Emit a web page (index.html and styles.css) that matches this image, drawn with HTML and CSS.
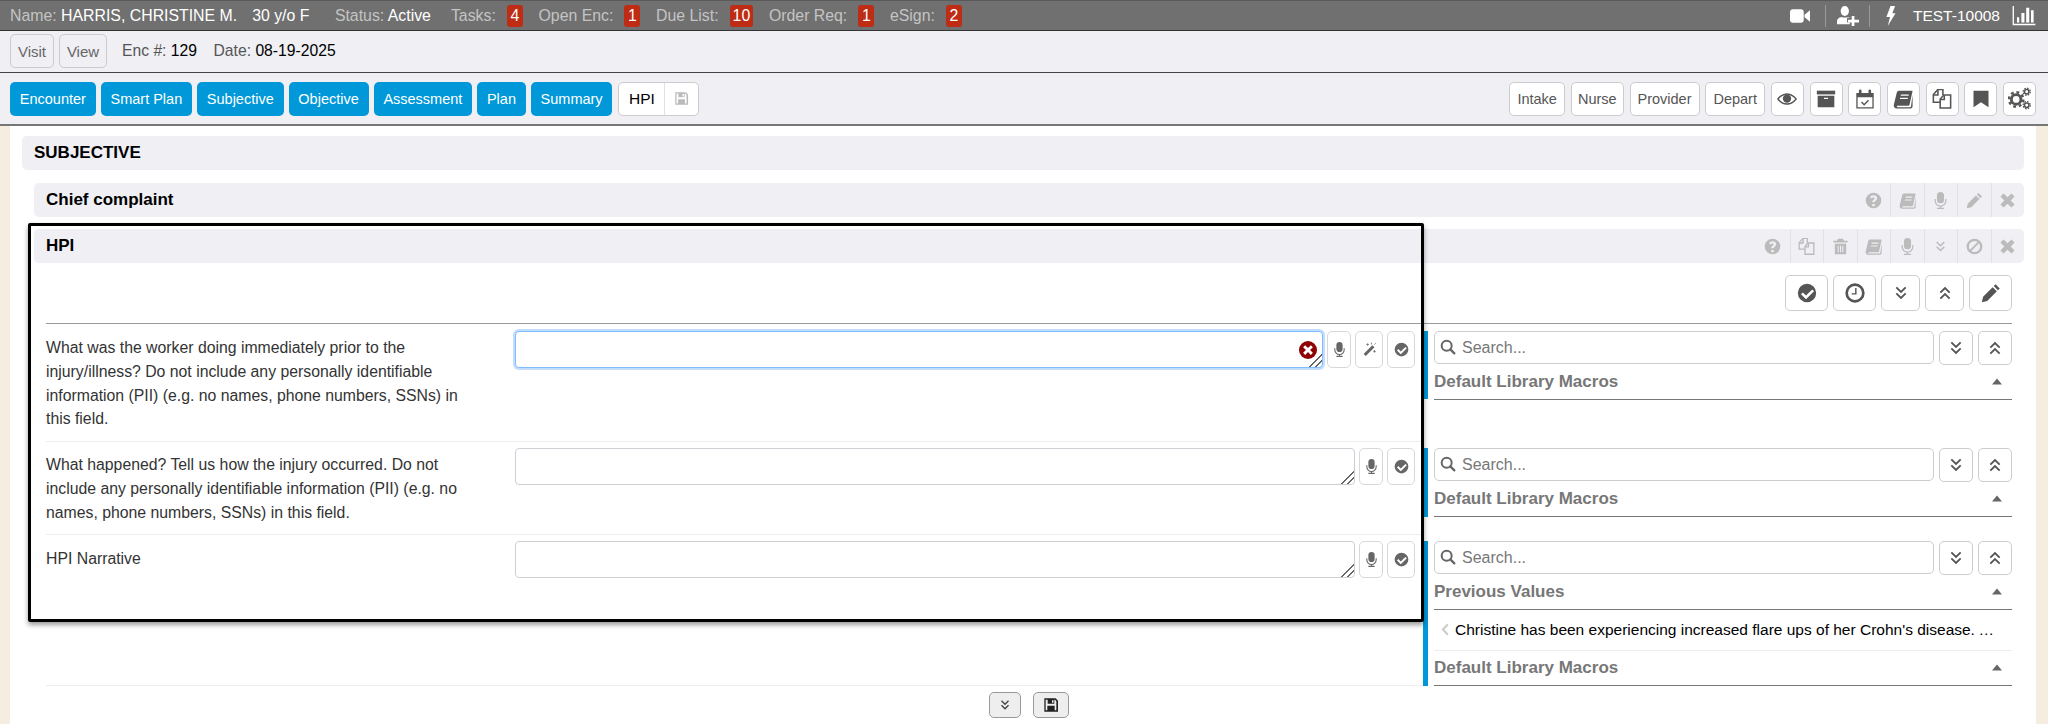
FILE: index.html
```html
<!DOCTYPE html>
<html lang="en">
<head>
<meta charset="utf-8">
<title>Encounter - HPI</title>
<link rel="stylesheet" href="styles.css">
</head>
<body>
<svg class="sprite" xmlns="http://www.w3.org/2000/svg">
  <symbol id="i-video" viewBox="0 0 24 24"><rect x="0" y="4" width="16.500" height="16" rx="3.500"/><path d="M17.500 10.500 24 5v14l-6.500-5.500z"/></symbol>
  <symbol id="i-userplus" viewBox="0 0 24 24"><ellipse cx="8.500" cy="6.500" rx="4.500" ry="5.500"/><path d="M0 21v-3c0-3 2-4.500 5-5 1 1 5.500 1 7 0 .8.200 1.500.5 2 1h-3v5h3v2z"/><path d="M16 12h3v4h5v3h-5v4h-3v-4h-4v-3h4z"/></symbol>
  <symbol id="i-bolt" viewBox="0 0 12 24"><path d="M6 1h5L8 9h3.500L3 23l2.500-10H1.500z"/></symbol>
  <symbol id="i-chart" viewBox="0 0 26 24"><path d="M0 1h1.500v20.500H26V23H0z"/><path d="M5 14h2.500v6H5zM10 9h3.500v11H10zM15.500 3H19v17h-3.500zM21 6h3v14h-3z"/></symbol>
  <symbol id="i-eye" viewBox="0 0 24 24"><path fill-rule="evenodd" d="M12 5C6.500 5 2.200 8.800 0 12c2.200 3.200 6.500 7 12 7s9.800-3.800 12-7c-2.200-3.200-6.500-7-12-7zm0 1.800c4.400 0 8 2.800 9.800 5.200-1.800 2.400-5.400 5.200-9.800 5.200S4 14.400 2.200 12C4 9.600 7.600 6.800 12 6.800z"/><circle cx="12" cy="11.500" r="5"/></symbol>
  <symbol id="i-archive" viewBox="0 0 24 24"><rect x="1" y="2" width="22" height="4.500"/><path fill-rule="evenodd" d="M2 8h20v14H2zM9.500 10.500V12h5v-1.500z"/></symbol>
  <symbol id="i-calendar" viewBox="1.500 .5 21 23"><path fill-rule="evenodd" d="M2 5h20v18H2zM3.500 10v11.500h17V10z"/><rect x="5" y="1" width="3" height="6" rx="1.500"/><rect x="16" y="1" width="3" height="6" rx="1.500"/><path class="line" d="M8 15.500l3 3 5-5"/></symbol>
  <symbol id="i-book" viewBox="0 0 24 24"><path fill-rule="evenodd" d="M7 2h15.500c.8 0 1 .6.800 1.300L19.800 19c-.2.800-.7 1.100-1.400 1.100H5.500c-1.400 0-1.400 1.900.3 1.900h14.600c.6 0 1-.4 1.200-1L23.500 7v14c-.2 1.400-1.300 2.500-3 2.500H4.500C2 23.500.5 21.300 1 19L4.500 4.500C4.900 3 5.700 2 7 2zm2.500 4.500-.3 1.500h9.500l.3-1.500zm-1 4-.3 1.500h9.500l.3-1.500z"/></symbol>
  <symbol id="i-copy" viewBox="1.500 1.500 21 22"><path class="line" d="M10 16H2.500V7.500L7.500 2H13v6"/><path class="line" d="M7.500 2.500V8H2.500"/><path class="line" d="M10 22.500V12.500L14 8h7.500v14.500z"/><path class="line" d="M14.500 8.500V13H10"/></symbol>
  <symbol id="i-bookmark" viewBox="0 0 24 24"><path d="M3 2h18v20L12 16 3 22z"/></symbol>
  <symbol id="i-gears" viewBox="0 0 24 24"><circle class="ring" cx="8.500" cy="13" r="5" stroke-width="3"/><circle class="teeth" cx="8.500" cy="13" r="7.500" stroke-width="2.500" stroke-dasharray="3 2.900"/><circle class="ring" cx="19.500" cy="5" r="2.300" stroke-width="1.600"/><circle class="teeth" cx="19.500" cy="5" r="3.700" stroke-width="1.400" stroke-dasharray="1.600 1.300"/><circle class="ring" cx="19.500" cy="19" r="2.300" stroke-width="1.600"/><circle class="teeth" cx="19.500" cy="19" r="3.700" stroke-width="1.400" stroke-dasharray="1.600 1.300"/></symbol>
  <symbol id="i-help" viewBox="0 0 24 24"><path fill-rule="evenodd" d="M12 1a11 11 0 1 0 0 22 11 11 0 0 0 0-22zm-1.800 16h3.600v3h-3.600zM12 4.500c3 0 5.200 1.700 5.200 4.300 0 3.200-3.500 3.400-3.500 5.700h-3.500c0-3.600 3.300-3.900 3.300-5.500 0-.8-.7-1.300-1.600-1.300-1 0-1.800.6-2.300 1.500L7 7.300C8 5.600 9.700 4.500 12 4.500z"/></symbol>
  <symbol id="i-mic" viewBox="0 0 24 24"><rect x="7" y="0" width="10" height="16" rx="5"/><path class="line" d="M4.500 10v2.500a7.500 7.500 0 0 0 15 0V10M12 20v3M7 23h10"/></symbol>
  <symbol id="i-pencil" viewBox="0 0 24 24"><path d="M17.500 1.500 22.500 6.500 20.300 8.700 15.300 3.700zM14 5l5 5L7.500 21.500 1 23l1.500-6.500z"/></symbol>
  <symbol id="i-times" viewBox="0 0 24 24"><path d="M6.500 2 12 7.500 17.500 2 22 6.500 16.500 12 22 17.500 17.500 22 12 16.500 6.500 22 2 17.500 7.500 12 2 6.500z"/></symbol>
  <symbol id="i-trash" viewBox="0 0 24 24"><path fill-rule="evenodd" d="M8.500 1h7l1.500 3h5v2.500H2V4h5zM4 8h16v15H4zm4 3v9h1.500v-9zm3.300 0v9h1.500v-9zm3.200 0v9H16v-9z"/></symbol>
  <symbol id="i-ddown" viewBox="0 0 24 24"><path class="line heavy" d="M5 3.500l7 7 7-7M5 12.500l7 7 7-7"/></symbol>
  <symbol id="i-dup" viewBox="0 0 24 24"><path class="line heavy" d="M5 11.500l7-7 7 7M5 20.500l7-7 7 7"/></symbol>
  <symbol id="i-ban" viewBox="0 0 24 24"><circle class="ring" cx="12" cy="12" r="9.500" stroke-width="3.200"/><path class="line heavy" d="M5.500 18.500l13-13"/></symbol>
  <symbol id="i-check" viewBox="0 0 24 24"><path fill-rule="evenodd" d="M12 1a11 11 0 1 0 0 22 11 11 0 0 0 0-22zm6.300 6.800 2.200 2.200-9.700 9.400-6-5.900 2.200-2.200 3.800 3.700z"/></symbol>
  <symbol id="i-clock" viewBox="0 0 24 24"><circle class="ring" cx="12" cy="12" r="10" stroke-width="3.200"/><path class="line" d="M13 6v7H8"/></symbol>
  <symbol id="i-wand" viewBox="0 0 24 24"><path d="M16.500 5l3.500 3.500L6 22.500 2.500 19z"/><path class="line thin" d="M9 2v4M7 4h4M20 13v4M18 15h4M15 1v3M22 2l-2 2"/></symbol>
  <symbol id="i-search" viewBox="0 0 24 24"><circle class="ring" cx="10" cy="10" r="7.500" stroke-width="3"/><path class="line round" d="M15.500 15.500l6 6"/></symbol>
  <symbol id="i-save" viewBox="0 0 24 24"><path fill-rule="evenodd" d="M2 2h17l3.500 3.500V22H2zM4 4v16h16V6.500L18 4h-1v6H7V4zm9.500.8v4h2.200v-4zM6.500 13h11v7h-11z"/></symbol>
  <symbol id="i-caret" viewBox="0 0 12 8"><path d="M6 .5 12 7.500H0z"/></symbol>
  <symbol id="i-chev" viewBox="0 0 10 16"><path class="line heavy" d="M8.500 1.500 2.500 8l6 6.500"/></symbol>
  <symbol id="i-error" viewBox="0 0 24 24"><circle cx="12" cy="12" r="12"/><path class="cross" d="M8.200 5.500 12 9.300l3.800-3.800 2.700 2.700L14.700 12l3.800 3.800-2.700 2.700-3.800-3.800-3.800 3.800-2.700-2.700L9.300 12 5.500 8.200z"/></symbol>
</svg>

<header class="patient-bar">
  <span class="info name">Name: <b>HARRIS, CHRISTINE M.</b></span>
  <span class="info age"><b>30 y/o F</b></span>
  <span class="info status">Status: <b>Active</b></span>
  <span class="info">Tasks:</span><span class="badge">4</span>
  <span class="info">Open Enc:</span><span class="badge">1</span>
  <span class="info">Due List:</span><span class="badge">10</span>
  <span class="info">Order Req:</span><span class="badge">1</span>
  <span class="info">eSign:</span><span class="badge">2</span>
  <div class="bar-tools">
    <svg class="ti ti-video"><use href="#i-video"/></svg>
    <span class="bar-sep"></span>
    <svg class="ti ti-user"><use href="#i-userplus"/></svg>
    <span class="bar-sep"></span>
    <svg class="ti ti-bolt"><use href="#i-bolt"/></svg>
    <span class="bar-user">TEST-10008</span>
    <svg class="ti ti-chart"><use href="#i-chart"/></svg>
  </div>
</header>

<div class="enc-bar">
  <button class="btn btn-visit">Visit</button>
  <button class="btn btn-view">View</button>
  <span class="enc-field">Enc #: <b>129</b></span>
  <span class="enc-field">Date: <b>08-19-2025</b></span>
</div>

<nav class="nav-bar">
  <a class="tab">Encounter</a>
  <a class="tab">Smart Plan</a>
  <a class="tab">Subjective</a>
  <a class="tab">Objective</a>
  <a class="tab">Assessment</a>
  <a class="tab">Plan</a>
  <a class="tab">Summary</a>
  <div class="hpi-group"><span class="hpi-name">HPI</span><span class="hpi-save"><svg class="ico ico-sm"><use href="#i-save"/></svg></span></div>
  <div class="nav-right">
    <button class="btn btn-nav w-intake">Intake</button>
    <button class="btn btn-nav w-nurse">Nurse</button>
    <button class="btn btn-nav w-provider">Provider</button>
    <button class="btn btn-nav w-depart">Depart</button>
    <button class="btn btn-ic"><svg class="ico"><use href="#i-eye"/></svg></button>
    <button class="btn btn-ic"><svg class="ico"><use href="#i-archive"/></svg></button>
    <button class="btn btn-ic"><svg class="ico"><use href="#i-calendar"/></svg></button>
    <button class="btn btn-ic"><svg class="ico"><use href="#i-book"/></svg></button>
    <button class="btn btn-ic"><svg class="ico"><use href="#i-copy"/></svg></button>
    <button class="btn btn-ic"><svg class="ico"><use href="#i-bookmark"/></svg></button>
    <button class="btn btn-ic"><svg class="ico ico-lg"><use href="#i-gears"/></svg></button>
  </div>
</nav>

<main class="workspace">
  <div class="sheet">
    <h1 class="section-head">SUBJECTIVE</h1>

    <div class="sub-head">
      <h2>Chief complaint</h2>
      <div class="head-tools">
        <span class="cell"><svg><use href="#i-help"/></svg></span>
        <span class="cell"><svg><use href="#i-book"/></svg></span>
        <span class="cell"><svg><use href="#i-mic"/></svg></span>
        <span class="cell"><svg><use href="#i-pencil"/></svg></span>
        <span class="cell"><svg><use href="#i-times"/></svg></span>
      </div>
    </div>

    <div class="sub-head sub-head-hpi">
      <h2>HPI</h2>
      <div class="head-tools">
        <span class="cell"><svg><use href="#i-help"/></svg></span>
        <span class="cell"><svg><use href="#i-copy"/></svg></span>
        <span class="cell"><svg><use href="#i-trash"/></svg></span>
        <span class="cell"><svg><use href="#i-book"/></svg></span>
        <span class="cell"><svg><use href="#i-mic"/></svg></span>
        <span class="cell"><svg class="small"><use href="#i-ddown"/></svg></span>
        <span class="cell"><svg><use href="#i-ban"/></svg></span>
        <span class="cell"><svg><use href="#i-times"/></svg></span>
      </div>
    </div>

    <div class="form-tools">
      <button class="btn btn-tool wide"><svg class="ico"><use href="#i-check"/></svg></button>
      <button class="btn btn-tool wide"><svg class="ico"><use href="#i-clock"/></svg></button>
      <button class="btn btn-tool"><svg class="ico ico-dbl"><use href="#i-ddown"/></svg></button>
      <button class="btn btn-tool"><svg class="ico ico-dbl"><use href="#i-dup"/></svg></button>
      <button class="btn btn-tool wide"><svg class="ico"><use href="#i-pencil"/></svg></button>
    </div>

    <section class="q-row q-row-1">
      <div class="q-main">
        <label class="q-label">What was the worker doing immediately prior to the injury/illness? Do not include any personally identifiable information (PII) (e.g. no names, phone numbers, SSNs) in this field.</label>
        <div class="q-input">
          <textarea class="answer answer-focus"></textarea>
          <svg class="err"><use href="#i-error"/></svg>
        </div>
        <button class="btn btn-mini narrow"><svg class="ico-mini"><use href="#i-mic"/></svg></button>
        <button class="btn btn-mini"><svg class="ico-mini"><use href="#i-wand"/></svg></button>
        <button class="btn btn-mini"><svg class="ico-mini"><use href="#i-check"/></svg></button>
      </div>
      <aside class="macro">
        <div class="search-row">
          <div class="search"><svg class="search-ico"><use href="#i-search"/></svg><input placeholder="Search..."></div>
          <button class="btn btn-sq"><svg class="ico ico-dbl"><use href="#i-ddown"/></svg></button>
          <button class="btn btn-sq"><svg class="ico ico-dbl"><use href="#i-dup"/></svg></button>
        </div>
        <div class="macro-head"><span>Default Library Macros</span><svg class="caret"><use href="#i-caret"/></svg></div>
      </aside>
    </section>

    <section class="q-row q-row-2">
      <div class="q-main">
        <label class="q-label">What happened? Tell us how the injury occurred. Do not include any personally identifiable information (PII) (e.g. no names, phone numbers, SSNs) in this field.</label>
        <div class="q-input"><textarea class="answer"></textarea></div>
        <button class="btn btn-mini narrow"><svg class="ico-mini"><use href="#i-mic"/></svg></button>
        <button class="btn btn-mini"><svg class="ico-mini"><use href="#i-check"/></svg></button>
      </div>
      <aside class="macro">
        <div class="search-row">
          <div class="search"><svg class="search-ico"><use href="#i-search"/></svg><input placeholder="Search..."></div>
          <button class="btn btn-sq"><svg class="ico ico-dbl"><use href="#i-ddown"/></svg></button>
          <button class="btn btn-sq"><svg class="ico ico-dbl"><use href="#i-dup"/></svg></button>
        </div>
        <div class="macro-head"><span>Default Library Macros</span><svg class="caret"><use href="#i-caret"/></svg></div>
      </aside>
    </section>

    <section class="q-row q-row-3">
      <div class="q-main">
        <label class="q-label">HPI Narrative</label>
        <div class="q-input"><textarea class="answer"></textarea></div>
        <button class="btn btn-mini narrow"><svg class="ico-mini"><use href="#i-mic"/></svg></button>
        <button class="btn btn-mini"><svg class="ico-mini"><use href="#i-check"/></svg></button>
      </div>
      <aside class="macro">
        <div class="search-row">
          <div class="search"><svg class="search-ico"><use href="#i-search"/></svg><input placeholder="Search..."></div>
          <button class="btn btn-sq"><svg class="ico ico-dbl"><use href="#i-ddown"/></svg></button>
          <button class="btn btn-sq"><svg class="ico ico-dbl"><use href="#i-dup"/></svg></button>
        </div>
        <div class="macro-head"><span>Previous Values</span><svg class="caret"><use href="#i-caret"/></svg></div>
        <div class="prev-item"><svg class="chev"><use href="#i-chev"/></svg><span class="prev-text">Christine has been experiencing increased flare ups of her Crohn's disease. Abdominal</span></div>
        <div class="macro-head macro-head-last"><span>Default Library Macros</span><svg class="caret"><use href="#i-caret"/></svg></div>
      </aside>
    </section>

    <footer class="form-foot">
      <button class="btn btn-foot"><svg class="ico-foot"><use href="#i-ddown"/></svg></button>
      <button class="btn btn-foot foot-save"><svg class="ico-foot save"><use href="#i-save"/></svg></button>
    </footer>

    <div class="highlight"></div>
  </div>
</main>
</body>
</html>
```
FILE: styles.css
```css
* { box-sizing: border-box; }
html, body { margin: 0; padding: 0; height: 724px; overflow: hidden; }
body { font-family: "Liberation Sans", Arial, sans-serif; font-size: 15px; color: #333; background: #fff; }
h1, h2 { margin: 0; }
b { font-weight: 400; }
svg { fill: currentColor; display: block; }
.sprite { position: absolute; width: 0; height: 0; }
.line { fill: none; stroke: currentColor; stroke-width: 1.7; }
.line.heavy { stroke-width: 2.700; }
.line.thin { stroke-width: 1.300; }
.line.round { stroke-width: 3.400; stroke-linecap: round; }
.ring, .teeth { fill: none; stroke: currentColor; }
.cross { fill: #fff; }

/* patient bar */
.patient-bar { height: 31px; display: flex; align-items: center; padding: 0 11px 0 10px; background: #707070; border-top: 1px solid #5a5a5a; border-bottom: 1px solid #333; color: #c4c4c4; font-size: 15.850px; }
.patient-bar b { color: #fff; }
.info { white-space: nowrap; }
.age { margin-left: 15px; }
.status { margin-left: 25.500px; margin-right: 20px; }
.badge { min-width: 16px; height: 22px; margin: 0 15.700px 0 11px; padding: 0 3px; background: #bd2c13; color: #fff; border-radius: 3px; text-align: center; line-height: 22px; }
.bar-tools { margin-left: auto; display: flex; align-items: center; color: #fff; }
.ti { width: 20px; height: 20px; }
.ti-user { width: 24px; height: 22px; margin: 0 9px 0 10px; }
.ti-video { margin-right: 15px; }
.ti-bolt { width: 11px; height: 22px; margin-left: 15px; }
.ti-chart { width: 26px; height: 21px; margin-left: 11px; }
.bar-sep { width: 1px; height: 22px; background: #999; }
.bar-user { margin-left: 17px; font-size: 15.500px; }

/* encounter bar */
.enc-bar { height: 42px; display: flex; align-items: center; padding: 0 10px 1px; background: #efeff4; border-bottom: 1px solid #444; color: #555; font-size: 15.700px; }
.enc-bar b { color: #000; }
.btn { font-family: inherit; margin: 0; padding: 0; background: #fff; border: 1px solid #ccc; border-radius: 5px; color: #555; display: flex; align-items: center; justify-content: center; }
.btn-visit, .btn-view { height: 34px; background: #efeff4; font-size: 15px; color: #666; }
.btn-visit { width: 44px; margin-right: 5px; }
.btn-view { width: 48px; margin-right: 15px; }
.enc-field { margin-right: 16.500px; }

/* nav bar */
.nav-bar { height: 53px; display: flex; align-items: center; padding: 0 12px 0 10px; background: #efeff4; border-bottom: 2px solid #777; }
.tab { height: 34px; padding: 0 9.800px; margin-right: 5px; background: #0098d9; color: #fff; border-radius: 5px; line-height: 34px; font-size: 14.500px; white-space: nowrap; }
.hpi-group { height: 34px; display: flex; margin-left: 1px; background: #fff; border: 1px solid #ccc; border-radius: 5px; }
.hpi-name { width: 46px; text-align: center; line-height: 32px; color: #000; font-size: 15.500px; border-right: 1px solid #e2e2e2; }
.hpi-save { width: 33px; display: flex; align-items: center; justify-content: center; color: #bbb; }
.nav-right { margin-left: auto; display: flex; gap: 5.700px; }
.btn-nav { height: 34px; font-size: 14.500px; }
.w-intake { width: 56px; }
.w-nurse { width: 53px; }
.w-provider { width: 70px; }
.w-depart { width: 60px; }
.btn-ic { width: 33px; height: 34px; }
.ico { width: 20px; height: 20px; color: #555; }
.ico-lg { width: 23px; height: 23px; }
.ico-sm { width: 15px; height: 15px; color: #bbb; }

/* workspace */
.workspace { height: 599px; padding: 0 12px 0 10px; background: #f5eee0; }
.sheet { position: relative; height: 100%; padding-top: 10px; background: #fff; }
.section-head { height: 34px; margin: 0 12px; padding-left: 12px; background: #efeff4; border-radius: 5px; color: #000; font-size: 17px; line-height: 34px; }
.sub-head { height: 34px; margin: 13px 12px 0 24px; padding-left: 12px; display: flex; justify-content: space-between; background: #efeff4; border-radius: 5px; color: #000; }
.sub-head-hpi { margin-top: 12px; }
.sub-head h2 { font-size: 17px; line-height: 34px; }
.head-tools { display: flex; color: #bbb; }
.cell { width: 33.500px; display: flex; align-items: center; justify-content: center; border-left: 1px solid #e2e2e2; }
.cell:first-child { border-left: 0; }
.cell svg { width: 17px; height: 17px; }
.cell svg.small { width: 13px; height: 13px; }

.form-tools { height: 61px; margin: 0 24px 0 36px; padding-top: 12px; display: flex; justify-content: flex-end; gap: 5px; border-bottom: 1px solid #999; }
.btn-tool { width: 39px; height: 36px; }
.btn-tool.wide { width: 43px; }
.ico-dbl { width: 16px; height: 16px; }

/* question rows */
.q-row { display: flex; padding-left: 36px; }
.q-main { width: 1377px; display: flex; align-items: flex-start; padding: 6px 8px 0 0; border-bottom: 1px solid #eee; }
.q-row-1 { height: 118px; }
.q-row-2 { height: 93px; }
.q-row-3 { height: 151px; }
.q-row-1 .q-main { padding-top: 7px; }
.q-label { width: 469px; flex: none; padding: 5px 45px 0 0; color: #333; font-size: 15.800px; line-height: 23.800px; }
.q-row-3 .q-label { padding-top: 6px; }
.q-input { position: relative; flex: 1; min-width: 0; margin-right: 4px; }
.answer { display: block; width: 100%; height: 37px; margin: 0; padding: 4px 8px; border: 1px solid #ccd0d5; border-radius: 4px; resize: both; outline: 0; font: inherit; }
.answer::-webkit-resizer { background: linear-gradient(135deg, transparent 56%, #666 56% 62%, transparent 62% 76%, #666 76% 82%, transparent 82%); }
.answer-focus { border-color: #80bdff; box-shadow: 0 0 0 2px #c2defc; }
.err { position: absolute; right: 6px; top: 10px; width: 18px; height: 18px; color: #8e0303; }
.btn-mini { flex: none; width: 28px; height: 37px; margin-right: 4px; border-color: #d8d8d8; }
.btn-mini:last-child { margin-right: 0; }
.btn-mini.narrow { width: 24px; }
.btn-mini svg { color: #666; }
.ico-mini { width: 15px; height: 15px; }
.macro { flex: 1; min-width: 0; margin: 6px 24px 0 0; padding-left: 6px; border-left: 5px solid #0098d9; }
.q-row-1 .macro { height: 68px; margin-top: 7px; }
.q-row-2 .macro { height: 69px; }
.search-row { display: flex; gap: 5px; }
.search { position: relative; flex: 1; min-width: 0; }
.search input { display: block; width: 100%; height: 33px; padding: 0 8px 0 27px; border: 1px solid #ccc; border-radius: 5px; outline: 0; font: 16px "Liberation Sans", Arial, sans-serif; }
.search input::placeholder { color: #777; opacity: 1; }
.search-ico { position: absolute; left: 6px; top: 8px; width: 16px; height: 16px; color: #666; }
.btn-sq { width: 34px; height: 33.500px; flex: none; }
.macro-head { height: 35px; display: flex; align-items: center; justify-content: space-between; padding-right: 10px; border-bottom: 1px solid #777; color: #777; font-weight: 700; font-size: 17px; }
.caret { width: 10px; height: 7px; color: #666; }
.prev-item { height: 41px; display: flex; align-items: center; border-bottom: 1px solid #eee; color: #000; font-size: 15.500px; }
.chev { width: 8px; height: 13px; margin: 0 6px 0 7px; flex: none; color: #ccc; }
.prev-text { min-width: 0; flex: 1; white-space: nowrap; overflow: hidden; text-overflow: ellipsis; padding-right: 8px; }
.macro-head-last { height: 35px; }

/* footer */
.form-foot { display: flex; justify-content: center; gap: 12px; padding: 6px 0 0 12px; }
.btn-foot { width: 32px; height: 26px; background: #eee; border-color: #999; }
.foot-save { width: 36px; }
.ico-foot { width: 12px; height: 12px; color: #444; }
.ico-foot.save { width: 16px; height: 16px; color: #222; }

/* annotation drawn over the page */
.highlight { position: absolute; left: 18px; top: 97px; width: 1396px; height: 399px; border: 3px solid #000; border-radius: 2px; box-shadow: 0 3px 5px rgba(0, 0, 0, .4); pointer-events: none; }
```
